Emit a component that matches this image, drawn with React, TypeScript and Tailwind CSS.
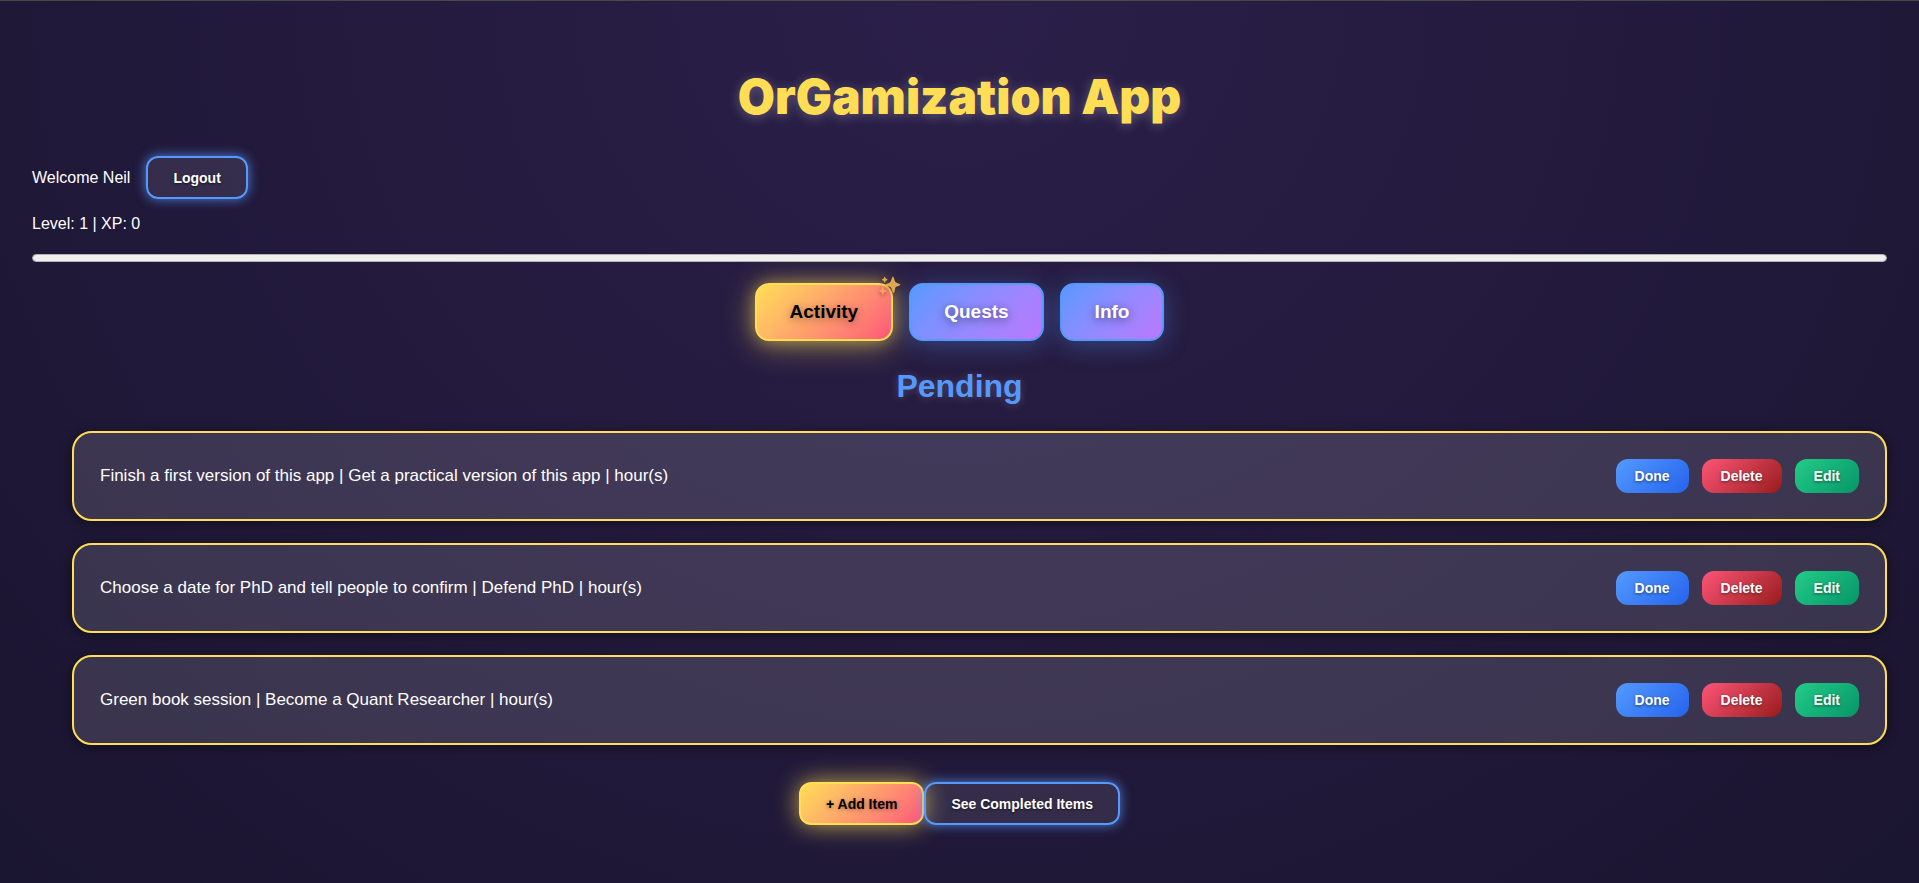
import { useState } from "react";
import type { ReactNode } from "react";

type Task = { id: number; text: string };

const tasks: Task[] = [
  { id: 1, text: "Finish a first version of this app | Get a practical version of this app | hour(s)" },
  { id: 2, text: "Choose a date for PhD and tell people to confirm | Defend PhD | hour(s)" },
  { id: 3, text: "Green book session | Become a Quant Researcher | hour(s)" },
];

const tabs = ["Activity", "Quests", "Info"];

function Sparkles() {
  return (
    <svg
      viewBox="0 0 24 22"
      aria-hidden="true"
      className="absolute -top-[10px] -right-[11px] h-[22px] w-6 opacity-85 drop-shadow-[0_1px_2px_rgba(0,0,0,0.5)]"
    >
      <g fill="#fdbb55">
        <path d="M14.300 2.200c.3-.8 1.100-.8 1.300 0l1.500 4.300c.2.500.5.8 1 1l3.600 1.500c.8.3.8 1.100 0 1.400l-3.400 1.300c-.5.2-.8.6-1 1.100l-.9 4.400c-.2.900-1.300.9-1.600 0l-1.500-4c-.2-.5-.5-.9-1-1.100L8.200 10.600c-.8-.3-.8-1.100 0-1.500l3.300-1.400c.5-.2.9-.6 1.100-1.100z" />
        <path d="M6.200 2.200c.2-.5.8-.5 1 0l.5 1.300 1.400.7c.5.2.5.8 0 1l-1.400.6-.5 1.400c-.2.5-.8.5-1 0l-.5-1.400-1.400-.6c-.5-.2-.5-.8 0-1l1.400-.7z" />
      </g>
      <path
        fill="#ffa064"
        d="M4.100 12.600c.2-.6 1-.6 1.200 0l.7 2 2 .8c.6.3.6 1 0 1.200l-2 .8-.7 2c-.2.6-1 .6-1.200 0l-.7-2-2-.8c-.6-.2-.6-.9 0-1.200l2-.8z"
      />
    </svg>
  );
}

function OutlineButton({ children }: { children: ReactNode }) {
  return (
    <button
      type="button"
      className="relative h-[43px] rounded-xl border-2 border-[#5599ff] bg-white/9 px-[25px] text-sm font-bold text-white shadow-[0_0_12px_rgba(85,153,255,0.8)] text-shadow-[0_1px_2px_rgba(0,0,0,0.6)]"
    >
      {children}
    </button>
  );
}

function TaskCard({ task }: { task: Task }) {
  const action =
    "h-[34px] rounded-xl px-[19px] text-sm font-bold text-white text-shadow-[0_1px_3px_rgba(0,0,0,0.5)]";
  return (
    <li className="flex min-h-[90px] items-center justify-between gap-6 rounded-[20px] border-2 border-[#ffdd55] bg-white/13 px-[26px] shadow-[0_2px_12px_rgba(0,0,0,0.45)]">
      <span className="text-[17px] leading-6 text-white">{task.text}</span>
      <div className="flex shrink-0 gap-[13px]">
        <button type="button" className={`${action} bg-linear-135 from-[#5599ff] to-[#2563eb]`}>
          Done
        </button>
        <button type="button" className={`${action} bg-linear-135 from-[#ff5577] to-[#991b1b]`}>
          Delete
        </button>
        <button type="button" className={`${action} bg-linear-135 from-[#22cc88] to-[#059669]`}>
          Edit
        </button>
      </div>
    </li>
  );
}

export default function App() {
  const [active, setActive] = useState("Activity");

  return (
    <main className="min-h-screen border-t border-[#464a46] bg-[radial-gradient(ellipse_at_top,#2b1f49,#1a1530)] px-8 pt-[72px] pb-14 font-['Liberation_Sans',Arial,sans-serif] text-base leading-6 text-white">
      <h1 className="text-center font-['Inter',sans-serif] text-[48px] leading-[48px] font-black text-[#ffdd55] text-shadow-[0_2px_12px_rgba(255,255,255,0.27)]">
        OrGamization App
      </h1>

      <header className="mt-[35px]">
        <div className="flex items-center gap-4">
          <span>Welcome Neil</span>
          <OutlineButton>Logout</OutlineButton>
        </div>
        <p className="mt-[13px]">Level: 1 | XP: 0</p>
        <progress
          aria-label="Experience"
          value={0}
          max={100}
          className="mt-[18px] block h-2 w-full appearance-none overflow-hidden rounded border border-[#b2b2b2] bg-[#efefef] [&::-webkit-progress-bar]:bg-[#efefef] [&::-webkit-progress-value]:bg-[#22cc88]"
        />
      </header>

      <nav className="mt-[21px] flex justify-center gap-4">
        {tabs.map((tab) => (
          <button
            key={tab}
            type="button"
            onClick={() => setActive(tab)}
            className={
              tab === active
                ? "relative h-[58px] rounded-[14px] border-2 border-[#ffdd55] bg-linear-135 from-[#ffdd55] to-[#ff5577] px-[33px] text-[19px] font-bold text-black shadow-[0_0_16px_rgba(255,221,85,0.4),0_4px_32px_rgba(255,221,85,0.5)] text-shadow-[0_2px_8px_rgba(0,0,0,0.4)]"
                : "relative h-[58px] rounded-[14px] border-2 border-[#5599ff] bg-linear-135 from-[#5599ff] to-[#bb77ff] px-[33px] text-[19px] font-bold text-white shadow-[0_4px_24px_rgba(85,153,255,0.35)] text-shadow-[0_2px_8px_rgba(0,0,0,0.5)]"
            }
          >
            {tab}
            {tab === active && <Sparkles />}
          </button>
        ))}
      </nav>

      <section>
        <h2 className="mt-[27px] text-center text-[32px] leading-9 font-bold text-[#5599ff] text-shadow-[0_1px_8px_rgba(255,255,255,0.2)]">
          Pending
        </h2>
        <ul className="mt-[27px] flex flex-col gap-[22px] pl-10">
          {tasks.map((task) => (
            <TaskCard key={task.id} task={task} />
          ))}
        </ul>
        <div className="mt-[37px] flex justify-center">
          <button
            type="button"
            className="h-[43px] rounded-xl border-2 border-[#ffdd55] bg-linear-135 from-[#ffdd55] to-[#ff5577] px-[25px] text-sm font-bold text-black shadow-[0_0_24px_rgba(255,221,85,0.75)] text-shadow-[0_1px_4px_rgba(0,0,0,0.4)]"
          >
            + Add Item
          </button>
          <OutlineButton>See Completed Items</OutlineButton>
        </div>
      </section>
    </main>
  );
}
